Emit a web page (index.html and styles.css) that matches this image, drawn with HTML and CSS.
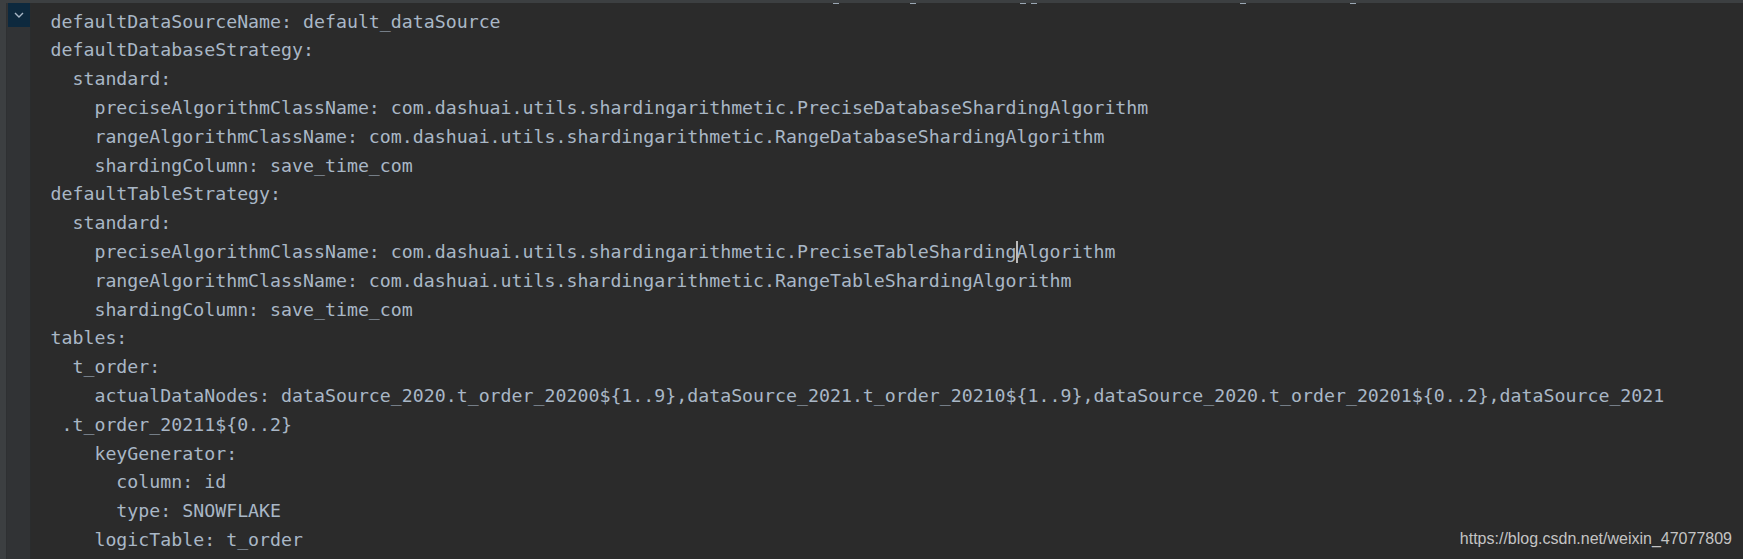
FILE: index.html
```html
<!DOCTYPE html>
<html>
<head>
<meta charset="utf-8">
<link rel="stylesheet" href="styles.css">
</head>
<body>
<div class="topbar"></div>
<div class="main">
  <div class="strip"></div>
  <div class="gutter">
    <div class="fold">
      <svg width="10" height="6" viewBox="0 0 10 6"><path d="M1 1 L5 5 L9 1" fill="none" stroke="#a9b7c6" stroke-width="1.4"/></svg>
    </div>
  </div>
  <div class="editor">
    <div class="code">
<div class="ln prev"><span class="tail t1"></span><span class="tail t2"></span><span class="tail t3"></span><span class="tail t4"></span><span class="tail t5"></span><span class="tail t6"></span></div>
<div class="ln">defaultDataSourceName: default_dataSource</div>
<div class="ln">defaultDatabaseStrategy:</div>
<div class="ln">  standard:</div>
<div class="ln">    preciseAlgorithmClassName: com.dashuai.utils.shardingarithmetic.PreciseDatabaseShardingAlgorithm</div>
<div class="ln">    rangeAlgorithmClassName: com.dashuai.utils.shardingarithmetic.RangeDatabaseShardingAlgorithm</div>
<div class="ln">    shardingColumn: save_time_com</div>
<div class="ln">defaultTableStrategy:</div>
<div class="ln">  standard:</div>
<div class="ln">    preciseAlgorithmClassName: com.dashuai.utils.shardingarithmetic.PreciseTableSharding<span class="caret"></span>Algorithm</div>
<div class="ln">    rangeAlgorithmClassName: com.dashuai.utils.shardingarithmetic.RangeTableShardingAlgorithm</div>
<div class="ln">    shardingColumn: save_time_com</div>
<div class="ln">tables:</div>
<div class="ln">  t_order:</div>
<div class="ln">    actualDataNodes: dataSource_2020.t_order_20200${1..9},dataSource_2021.t_order_20210${1..9},dataSource_2020.t_order_20201${0..2},dataSource_2021</div>
<div class="ln"> .t_order_20211${0..2}</div>
<div class="ln">    keyGenerator:</div>
<div class="ln">      column: id</div>
<div class="ln">      type: SNOWFLAKE</div>
<div class="ln">    logicTable: t_order</div>
    </div>
  </div>
</div>
<div class="watermark">https://blog.csdn.net/weixin_47077809</div>
</body>
</html>
```
FILE: styles.css
```css
html, body {
  margin: 0;
  padding: 0;
  width: 1743px;
  height: 559px;
  overflow: hidden;
  background: #2b2b2b;
}
.topbar {
  height: 3px;
  background: #3c3f41;
}
.main {
  display: flex;
  height: 556px;
}
.strip {
  width: 6px;
  background: #3c3f41;
  border-right: 1px solid #2e3032;
}
.gutter {
  width: 23px;
  background: #313335;
  border-right: 1px solid #2a2c2d;
}
.fold {
  margin-left: 1px;
  width: 22px;
  height: 24px;
  background: #0d293e;
  display: flex;
  align-items: center;
  justify-content: center;
}
.editor {
  flex: 1;
  overflow: hidden;
  padding-left: 19.5px;
  background: #2b2b2b;
}
.code {
  margin-top: -24.2px;
  font-family: "DejaVu Sans Mono", monospace;
  font-size: 18.24px;
  line-height: 28.8px;
  color: #a9b7c6;
}
.ln {
  white-space: pre;
  height: 28.8px;
}
.prev {
  display: flex;
  align-items: flex-start;
  padding-top: 24.2px;
  height: 4.6px;
}
.tail {
  width: 6px;
  height: 1px;
  background: #9aa6b2;
  flex: none;
}
.t1 { margin-left: 782.5px; }
.t2 { margin-left: 71px; }
.t3 { margin-left: 104px; }
.t4 { margin-left: 5px; }
.t5 { margin-left: 203px; }
.t6 { margin-left: 104px; }
.caret {
  display: inline-block;
  width: 0;
  height: 22px;
  border-left: 2px solid #bbbbbb;
  margin-left: -1px;
  margin-right: -1px;
  vertical-align: -5px;
}
.watermark {
  position: absolute;
  right: 11px;
  top: 531px;
  font-family: "Liberation Sans", Arial, sans-serif;
  font-size: 16px;
  line-height: 16px;
  color: #c4c4c4;
  text-shadow: 0 0 1px #2b2b2b;
}
```
